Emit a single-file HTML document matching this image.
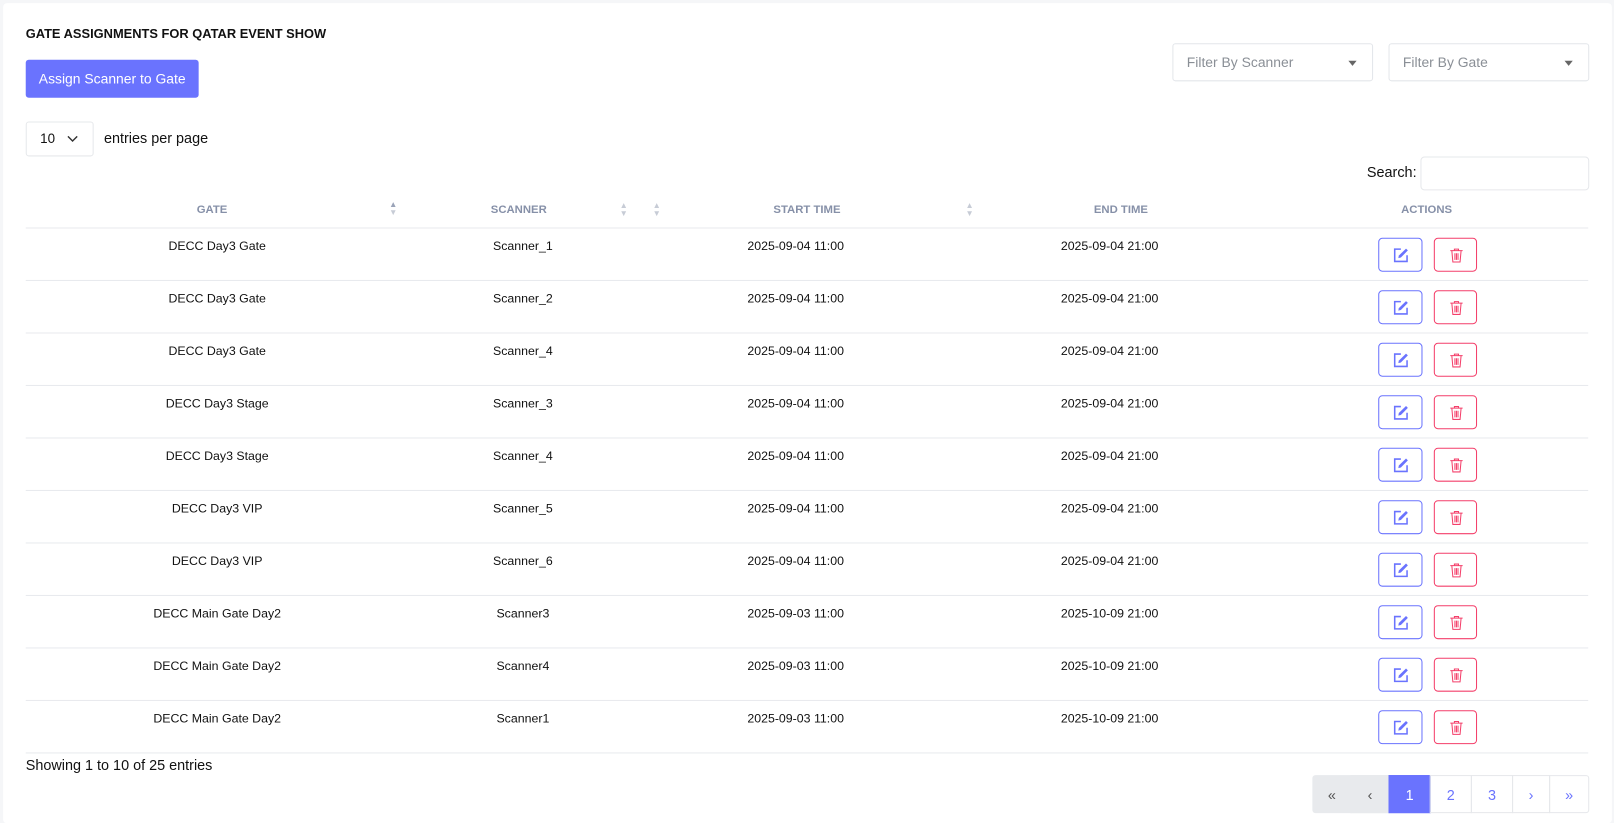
<!DOCTYPE html>
<html><head><meta charset="utf-8"><style>
*{box-sizing:border-box;margin:0;padding:0}
body{width:1614px;height:823px;background:#f5f6f8;font-family:"Liberation Sans",sans-serif;color:#111;position:relative;overflow:hidden}
#w{position:absolute;left:0;top:0;width:1568px;height:800px;transform:scale(1.0293);transform-origin:0 0}
.card{position:absolute;left:3px;top:3px;width:1563px;height:797px;background:#fff;border-radius:4px}
.a{position:absolute}
.title{left:25px;top:26px;font-size:12.5px;font-weight:bold;color:#111}
.btn{left:25px;top:58px;width:168px;height:37px;background:#6a73fe;border-radius:3px;color:#fff;font-size:13.5px;line-height:37px;text-align:center}
.sel{border:1px solid #e3e6ea;border-radius:3px;height:37px;font-size:13.5px;color:#8a8f96;line-height:35px;padding-left:13px}
.tri{position:absolute;right:15px;top:16px;border-left:4px solid transparent;border-right:4px solid transparent;border-top:5px solid #666}
.th{font-size:11px;color:#8690a8;font-weight:bold;top:198px;transform:translateX(-50%)}
.td{font-size:12px;color:#111;transform:translateX(-50%)}
.line{left:25px;width:1518px;height:1px;background:#e8eaee}
.eb,.db{width:43px;height:33px;border-radius:4px;border:1px solid #6a73fe}
.db{border-color:#f43f6a;width:42px}
.eb svg,.db svg{position:absolute;left:13px;top:8px}
.sort{font-size:8px;color:#c7ccd6;line-height:8px}
.pg{top:753px;height:37px;font-size:14px;line-height:37px;text-align:center;color:#6a73fe;border:1px solid #e6e8eb}
</style></head><body><div id="w">
<div class="card"></div>
<div class="a title">GATE ASSIGNMENTS FOR QATAR EVENT SHOW</div>
<div class="a btn">Assign Scanner to Gate</div>
<div class="a sel" style="left:1139px;top:42px;width:195px">Filter By Scanner<span class="tri"></span></div>
<div class="a sel" style="left:1349px;top:42px;width:195px">Filter By Gate<span class="tri"></span></div>
<div class="a" style="left:25px;top:118px;width:66px;height:34px;border:1px solid #e6e8eb;border-radius:3px;font-size:13px;line-height:32px;padding-left:13px">10<svg style="position:absolute;left:39px;top:12px" width="11" height="8" viewBox="0 0 11 8"><path d="M1 1.5l4.5 4.5 4.5-4.5" fill="none" stroke="#333" stroke-width="1.4"/></svg></div>
<div class="a" style="left:101px;top:126px;font-size:14px">entries per page</div>
<div class="a" style="left:1328px;top:159px;font-size:14px">Search:</div>
<div class="a" style="left:1380px;top:152px;width:164px;height:33px;border:1px solid #e6e8eb;border-radius:4px"></div>
<div class="a th" style="left:206px">GATE</div>
<div class="a th" style="left:504px">SCANNER</div>
<div class="a th" style="left:784px">START TIME</div>
<div class="a th" style="left:1089px">END TIME</div>
<div class="a th" style="left:1386px">ACTIONS</div>
<div class="a sort" style="left:378px;top:195px"><span style="color:#9aa3b8">▲</span><br>▼</div>
<div class="a sort" style="left:602px;top:196px">▲<br>▼</div>
<div class="a sort" style="left:634px;top:196px">▲<br>▼</div>
<div class="a sort" style="left:938px;top:196px">▲<br>▼</div>
<div class="a line" style="top:221px"></div>
<div id="rows"></div>
<div class="a" style="left:25px;top:735px;font-size:14px">Showing 1 to 10 of 25 entries</div>
<div class="a pg" style="left:1275px;width:38px;background:#e8eaed;color:#555;border-color:#e8eaed;border-radius:3px 0 0 3px">«</div>
<div class="a pg" style="left:1312px;width:38px;background:#e8eaed;color:#555;border-color:#e8eaed">‹</div>
<div class="a pg" style="left:1349px;width:41px;background:#6a73fe;color:#fff;border-color:#6a73fe">1</div>
<div class="a pg" style="left:1389px;width:41px">2</div>
<div class="a pg" style="left:1429px;width:41px">3</div>
<div class="a pg" style="left:1469px;width:37px">›</div>
<div class="a pg" style="left:1505px;width:39px;border-radius:0 3px 3px 0">»</div>
</div>
<script>
var d=[["DECC Day3 Gate","Scanner_1","2025-09-04 11:00","2025-09-04 21:00"],["DECC Day3 Gate","Scanner_2","2025-09-04 11:00","2025-09-04 21:00"],["DECC Day3 Gate","Scanner_4","2025-09-04 11:00","2025-09-04 21:00"],["DECC Day3 Stage","Scanner_3","2025-09-04 11:00","2025-09-04 21:00"],["DECC Day3 Stage","Scanner_4","2025-09-04 11:00","2025-09-04 21:00"],["DECC Day3 VIP","Scanner_5","2025-09-04 11:00","2025-09-04 21:00"],["DECC Day3 VIP","Scanner_6","2025-09-04 11:00","2025-09-04 21:00"],["DECC Main Gate Day2","Scanner3","2025-09-03 11:00","2025-10-09 21:00"],["DECC Main Gate Day2","Scanner4","2025-09-03 11:00","2025-10-09 21:00"],["DECC Main Gate Day2","Scanner1","2025-09-03 11:00","2025-10-09 21:00"]];
var xs=[211,508,773,1078],h="";
var ed='<svg width="16" height="16" viewBox="0 0 16 16"><path d="M8 2H2v12h12V8" fill="none" stroke="#6a73fe" stroke-width="1.5"/><path d="M13 1.5l1.8 1.8L8 10.2 5.5 10.8 6 8.3z" fill="#6a73fe"/></svg>';
var tr='<svg width="16" height="16" viewBox="0 0 16 16"><path d="M2 3.5h12M6 3.5V2h4v1.5M3.5 3.5l1 11h7l1-11M6.5 6v6.5M8 6v6.5M9.5 6v6.5" fill="none" stroke="#f43f6a" stroke-width="1"/></svg>';
for(var i=0;i<10;i++){var t=221+i*51;
for(var j=0;j<4;j++)h+='<div class="a td" style="left:'+xs[j]+'px;top:'+(t+11)+'px">'+d[i][j]+'</div>';
h+='<div class="a eb" style="left:1339px;top:'+(t+10)+'px">'+ed+'</div><div class="a db" style="left:1393px;top:'+(t+10)+'px">'+tr+'</div>';
h+='<div class="a line" style="top:'+(t+51)+'px"></div>';}
document.getElementById("rows").innerHTML=h;
</script>
</body></html>
